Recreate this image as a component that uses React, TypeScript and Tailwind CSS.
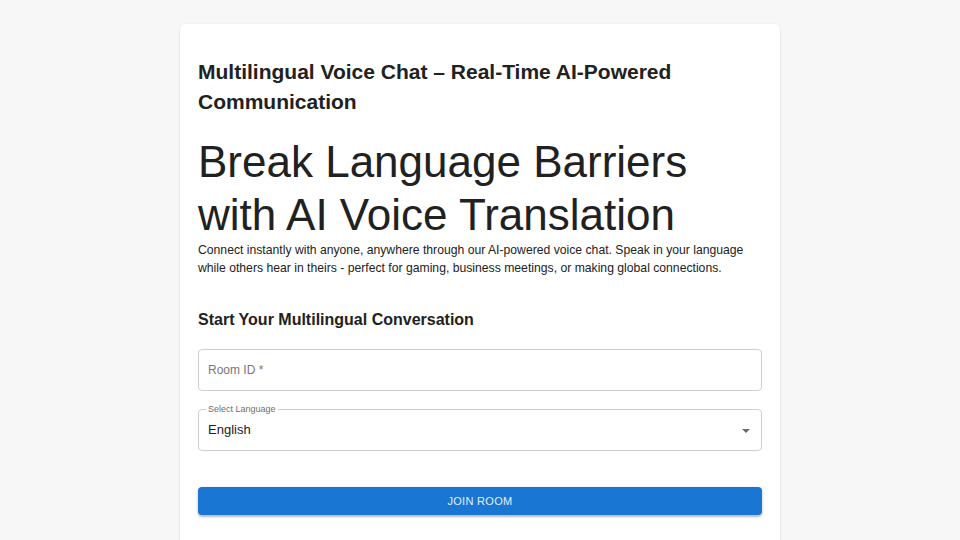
import React from 'react';

const font = { fontFamily: '"Liberation Sans", Arial, Helvetica, sans-serif' };

export default function App() {
  return (
    <div className="min-h-screen bg-[#f7f7f7] pt-[24px]" style={font}>
      <div className="mx-auto w-[600px] min-h-[600px] rounded-[5px] bg-white px-[18px] pt-[33px] shadow-[0_1px_3px_rgba(0,0,0,0.12),0_1px_1px_rgba(0,0,0,0.06)]">
        <h1 className="text-[21px] leading-[30px] font-bold text-[#212121]">
          Multilingual Voice Chat – Real-Time AI-Powered Communication
        </h1>
        <h2 className="mt-[18px] text-[44px] leading-[53px] font-normal text-[#212121]">
          Break Language Barriers with AI Voice Translation
        </h2>
        <p className="text-[12.2px] leading-[18px] text-[#222222]">
          Connect instantly with anyone, anywhere through our AI-powered voice chat. Speak in your language while
          others hear in theirs - perfect for gaming, business meetings, or making global connections.
        </p>

        <h3 className="mt-[31px] text-[16px] leading-[24px] font-bold text-[#212121]">
          Start Your Multilingual Conversation
        </h3>

        <div className="mt-[17px] flex h-[42px] items-center rounded-[4px] border border-[#cfcfcf] pl-[9px]">
          <span className="text-[12px] text-[#777777]">Room ID *</span>
        </div>

        <div className="relative mt-[18px] flex h-[42px] items-center justify-between rounded-[4px] border border-[#cfcfcf] pl-[9px] pr-[11px]">
          <span className="absolute left-[7px] top-[-6px] bg-white px-[2px] text-[9px] leading-[11px] text-[#6f6f6f]">
            Select Language
          </span>
          <span className="text-[13px] text-[#212121]">English</span>
          <svg width="8" height="4" viewBox="0 0 8 4" className="mt-[1px]">
            <path d="M0 0h8L4 4z" fill="#6b6b6b" />
          </svg>
        </div>

        <button className="mt-[36px] flex h-[28px] w-full items-center justify-center rounded-[4px] bg-[#1976d2] text-[11px] tracking-[0.3px] text-[#e3f0fc] shadow-[0_2px_2px_rgba(0,0,0,0.2),0_1px_4px_rgba(0,0,0,0.12)]">
          JOIN ROOM
        </button>
      </div>
    </div>
  );
}
